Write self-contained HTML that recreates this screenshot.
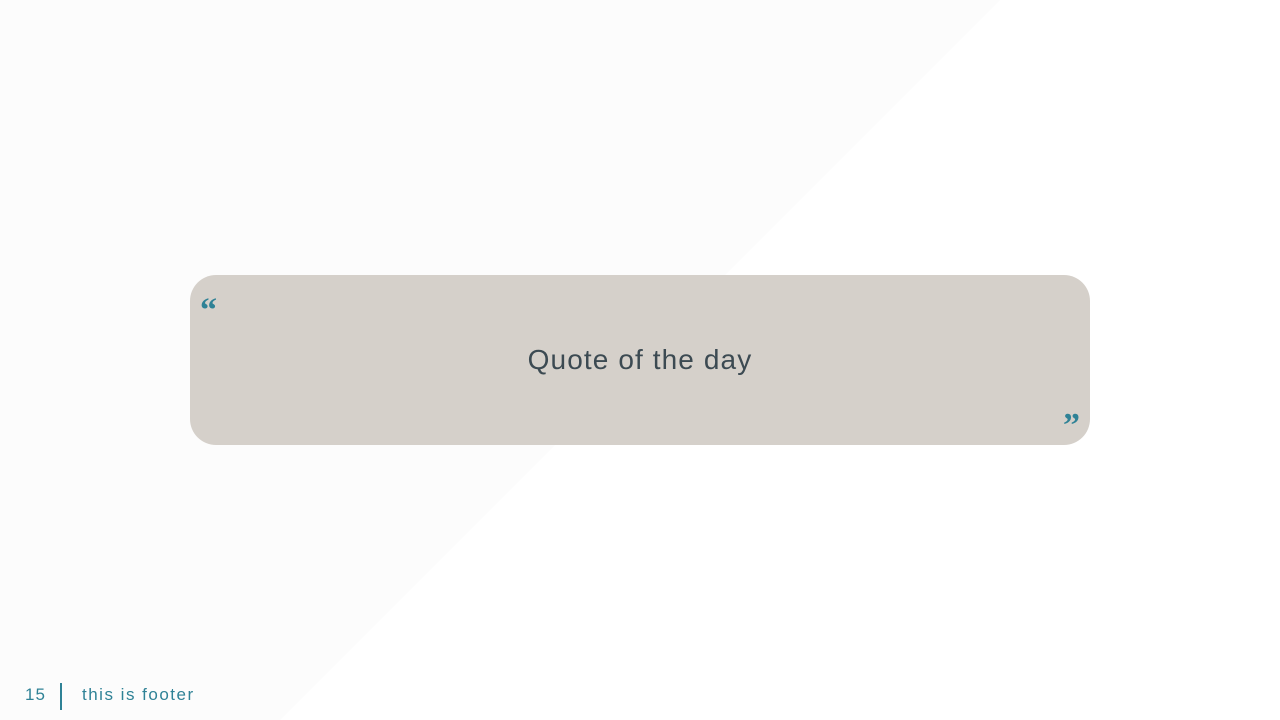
<!DOCTYPE html>
<html><head><meta charset="utf-8"><style>
html,body{margin:0;padding:0;width:1280px;height:720px;overflow:hidden;background:#fff;font-family:"Liberation Sans",sans-serif}
.bg{position:absolute;left:0;top:0}
.box{position:absolute;left:190px;top:275px;width:900px;height:170px;background:#d5d0ca;border-radius:26px}
.q{position:absolute;left:0;width:900px;top:70px;text-align:center;font-size:28px;color:#3c4a52;letter-spacing:1.1px;line-height:30px}
.m1{position:absolute;left:10px;top:16px;font-family:"Liberation Serif",serif;font-weight:bold;font-size:34px;color:#2f8296;line-height:40px;letter-spacing:1px}
.m2{position:absolute;right:9px;top:131px;font-family:"Liberation Serif",serif;font-weight:bold;font-size:34px;color:#2f8296;line-height:40px;letter-spacing:1px}
.f{position:absolute;top:685px;font-size:17px;color:#2f8296;letter-spacing:1.5px;line-height:20px}
.bar{position:absolute;left:60px;top:683px;width:2px;height:27px;background:#2f8296}
</style></head><body>
<svg class="bg" width="1280" height="720"><polygon points="0,0 1000,0 280,720 0,720" fill="#fcfcfc"/></svg>
<div class="box"><div class="m1">“</div><div class="q">Quote of the day</div><div class="m2">”</div></div>
<div class="f" style="left:25px;letter-spacing:1px">15</div>
<div class="bar"></div>
<div class="f" style="left:82px">this is footer</div>
</body></html>
